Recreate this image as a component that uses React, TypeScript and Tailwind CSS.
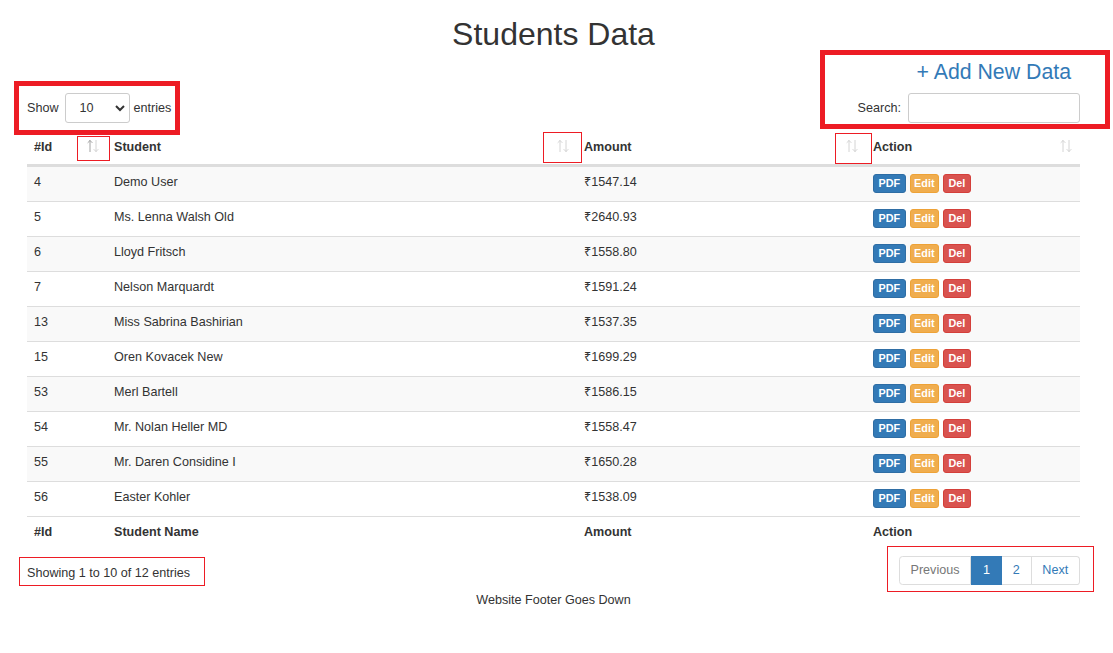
import React from "react";

const rows: [string, string, string][] = [
  ["4", "Demo User", "₹1547.14"],
  ["5", "Ms. Lenna Walsh Old", "₹2640.93"],
  ["6", "Lloyd Fritsch", "₹1558.80"],
  ["7", "Nelson Marquardt", "₹1591.24"],
  ["13", "Miss Sabrina Bashirian", "₹1537.35"],
  ["15", "Oren Kovacek New", "₹1699.29"],
  ["53", "Merl Bartell", "₹1586.15"],
  ["54", "Mr. Nolan Heller MD", "₹1558.47"],
  ["55", "Mr. Daren Considine I", "₹1650.28"],
  ["56", "Easter Kohler", "₹1538.09"],
];

function SortIcon({ active = false }: { active?: boolean }) {
  return (
    <svg width="12" height="14" viewBox="0 0 12 14" className="absolute right-[8px] top-[9px]">
      <g fill="none" strokeWidth="1" strokeLinecap="square">
        <path d="M3 1.5 V12.5 M1 3.5 L3 1.5 L5 3.5" stroke={active ? "#a2a2a2" : "#d4d4d4"} />
        <path d="M9 1.5 V12.5 M7 10.5 L9 12.5 L11 10.5" stroke="#d4d4d4" />
      </g>
    </svg>
  );
}

function Buttons() {
  return (
    <div className="flex gap-[4px] pt-[7px]">
      <span className="h-[19px] px-[4.5px] rounded-[3px] bg-[#337ab7] border border-[#2e6da4] text-white font-bold text-[10.8px] leading-[17px]">PDF</span>
      <span className="h-[19px] px-[3.5px] rounded-[3px] bg-[#f0ad4e] border border-[#eea236] text-white font-bold text-[10.8px] leading-[17px]">Edit</span>
      <span className="h-[19px] px-[4.5px] rounded-[3px] bg-[#d9534f] border border-[#d43f3a] text-white font-bold text-[10.8px] leading-[17px]">Del</span>
    </div>
  );
}

export default function App() {
  return (
    <div
      className="w-[1113px] min-h-[653px] bg-white text-[#333] text-[12.6px]"
      style={{ fontFamily: '"Liberation Sans", Arial, "Noto Sans", sans-serif' }}
    >
      <div className="ml-[27px] w-[1053px]">
        <h1 className="pt-[16px] h-[53px] text-[32px] leading-[36px] text-center font-normal">Students Data</h1>

        <div className="flex justify-between items-end mt-[7px]">
          <div className="relative flex items-center h-[30px]">
            <span className="leading-[16px]">Show</span>
            <div className="relative ml-[6px] mr-[4px]">
              <select className="appearance-none w-[65px] h-[30px] border border-[#ccc] rounded-[3px] pl-[14px] bg-white text-[12.6px] leading-[16px] outline-none">
                <option>10</option>
              </select>
              <svg width="10" height="7" viewBox="0 0 10 7" className="absolute left-[50px] top-[12px] pointer-events-none">
                <path d="M1 1 L5 5 L9 1" fill="none" stroke="#333" strokeWidth="2" />
              </svg>
            </div>
            <span className="leading-[16px]">entries</span>
            <div className="absolute z-10 left-[-13px] top-[-12px] w-[166px] h-[54px] border-[5px] border-[#ed1c24]" />
          </div>

          <div className="relative flex flex-col items-end">
            <a className="mr-[9px] text-[21.3px] leading-[24px] text-[#337ab7]">+ Add New Data</a>
            <div className="flex items-center mt-[9px]">
              <span className="leading-[16px] mr-[7px]">Search:</span>
              <input className="w-[172px] h-[30px] border border-[#ccc] rounded-[3px] outline-none" />
            </div>
            <div className="absolute z-10 right-[-30px] top-[-10px] w-[290px] h-[79px] border-[5px] border-[#ed1c24]" />
          </div>
        </div>

        <div className="mt-[7px]">
          <div className="relative flex h-[36px] border-b-2 border-[#ddd] font-bold">
            <div className="relative w-[80px] pl-[7px] pt-[1px] flex items-center">#Id<SortIcon active /></div>
            <div className="relative w-[470px] pl-[7px] pt-[1px] flex items-center">Student<SortIcon /></div>
            <div className="relative w-[289px] pl-[7px] pt-[1px] flex items-center">Amount<SortIcon /></div>
            <div className="relative w-[214px] pl-[7px] pt-[1px] flex items-center">Action<SortIcon /></div>
            <div className="absolute z-10 left-[50px] top-[6px] w-[33px] h-[25px] border border-solid border-[#ed1c24]" />
            <div className="absolute z-10 left-[516px] top-[2px] w-[39px] h-[31px] border border-solid border-[#ed1c24]" />
            <div className="absolute z-10 left-[808px] top-[3px] w-[37px] h-[31px] border border-solid border-[#ed1c24]" />
          </div>

          {rows.map(([id, name, amt], i) => (
            <div
              key={id}
              className={`flex h-[35px] border-t border-[#ddd] items-start ${i % 2 === 0 ? "bg-[#f9f9f9]" : "bg-white"}`}
            >
              <div className="w-[80px] pl-[7px] pt-[7px] leading-[16px]">{id}</div>
              <div className="w-[470px] pl-[7px] pt-[7px] leading-[16px]">{name}</div>
              <div className="w-[289px] pl-[7px] pt-[7px] leading-[16px]">{amt}</div>
              <div className="w-[214px] pl-[7px]"><Buttons /></div>
            </div>
          ))}

          <div className="flex h-[35px] border-t border-[#ddd] items-start font-bold">
            <div className="w-[80px] pl-[7px] pt-[7px] leading-[16px]">#Id</div>
            <div className="w-[470px] pl-[7px] pt-[7px] leading-[16px]">Student Name</div>
            <div className="w-[289px] pl-[7px] pt-[7px] leading-[16px]">Amount</div>
            <div className="w-[214px] pl-[7px] pt-[7px] leading-[16px]">Action</div>
          </div>
        </div>

        <div className="flex justify-between items-start">
          <div className="relative mt-[14px] leading-[16px]">
            Showing 1 to 10 of 12 entries
            <div className="absolute left-[-8px] top-[-8px] w-[186px] h-[29px] border border-[#ed1c24]" />
          </div>
          <div className="relative mt-[5px] flex h-[29px] text-[12.6px] leading-[27px]">
            <span className="px-[10.8px] border border-[#ddd] rounded-l-[3.6px] text-[#777]">Previous</span>
            <span className="px-[10.8px] border border-[#337ab7] bg-[#337ab7] text-white">1</span>
            <span className="px-[10.8px] border border-[#ddd] border-l-0 text-[#337ab7]">2</span>
            <span className="px-[10.8px] border border-[#ddd] border-l-0 rounded-r-[3.6px] text-[#337ab7]">Next</span>
            <div className="absolute left-[-12px] top-[-10px] w-[207px] h-[46px] border border-[#ed1c24]" />
          </div>
        </div>

        <div className="mt-[7px] text-center leading-[16px]">Website Footer Goes Down</div>
      </div>
    </div>
  );
}
